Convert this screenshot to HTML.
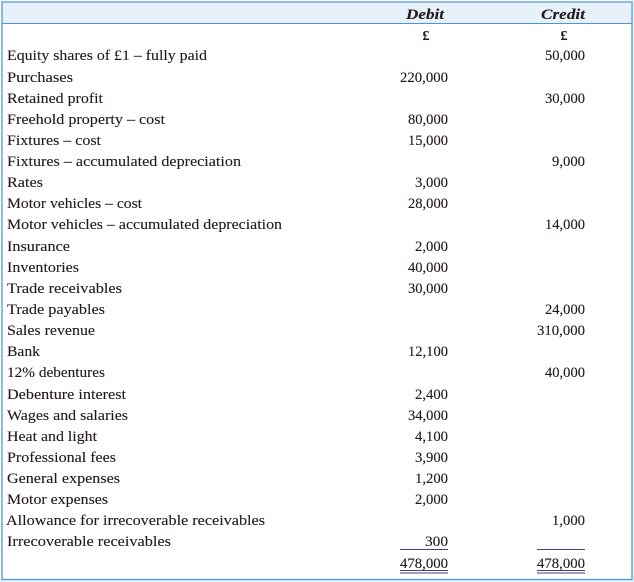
<!DOCTYPE html>
<html>
<head>
<meta charset="utf-8">
<style>
html,body{margin:0;padding:0;width:634px;height:582px;overflow:hidden;background:#fff}
svg{display:block}
text{font-family:"Liberation Serif",serif;font-size:14.5px;fill:#231a1a;stroke:#231a1a;stroke-width:.12px}
.n{text-anchor:end}
.h{font-weight:bold;font-style:italic;font-size:14.5px;text-anchor:middle}
.p{font-weight:bold;font-size:14px;text-anchor:middle}
</style>
</head>
<body>
<svg width="634" height="582" viewBox="0 0 634 582" xmlns="http://www.w3.org/2000/svg">
<rect x="0" y="0" width="634" height="582" fill="#fff"/>
<rect x="632" y="0" width="2" height="582" fill="#e4f3fb"/>
<rect x="0" y="580" width="634" height="2" fill="#e4f3fb"/>
<rect x="2" y="3" width="629" height="20" fill="#e8f0fa"/>
<rect x="2" y="2" width="630" height="577.5" fill="none" stroke="#4a97d8" stroke-width="1.3"/>
<rect x="2" y="23" width="630" height="1" fill="#4a97d8"/>

<text class="h" x="425" y="19" textLength="38" lengthAdjust="spacingAndGlyphs">Debit</text>
<text class="h" x="563" y="19" textLength="44" lengthAdjust="spacingAndGlyphs">Credit</text>
<text class="p" x="426" y="40">£</text>
<text class="p" x="564" y="40">£</text>

<text x="7" y="60" textLength="200" lengthAdjust="spacingAndGlyphs">Equity shares of £1 – fully paid</text>
<text x="7" y="82" textLength="66" lengthAdjust="spacingAndGlyphs">Purchases</text>
<text x="7" y="103" textLength="96" lengthAdjust="spacingAndGlyphs">Retained profit</text>
<text x="7" y="124" textLength="158" lengthAdjust="spacingAndGlyphs">Freehold property – cost</text>
<text x="7" y="145" textLength="94" lengthAdjust="spacingAndGlyphs">Fixtures – cost</text>
<text x="7" y="166" textLength="234" lengthAdjust="spacingAndGlyphs">Fixtures – accumulated depreciation</text>
<text x="7" y="187" textLength="36" lengthAdjust="spacingAndGlyphs">Rates</text>
<text x="7" y="208" textLength="135" lengthAdjust="spacingAndGlyphs">Motor vehicles – cost</text>
<text x="7" y="229" textLength="275" lengthAdjust="spacingAndGlyphs">Motor vehicles – accumulated depreciation</text>
<text x="7" y="251" textLength="63" lengthAdjust="spacingAndGlyphs">Insurance</text>
<text x="7" y="272" textLength="72" lengthAdjust="spacingAndGlyphs">Inventories</text>
<text x="7" y="293" textLength="115" lengthAdjust="spacingAndGlyphs">Trade receivables</text>
<text x="7" y="314" textLength="98" lengthAdjust="spacingAndGlyphs">Trade payables</text>
<text x="7" y="335" textLength="88" lengthAdjust="spacingAndGlyphs">Sales revenue</text>
<text x="7" y="356" textLength="33" lengthAdjust="spacingAndGlyphs">Bank</text>
<text x="7" y="377" textLength="98" lengthAdjust="spacingAndGlyphs">12% debentures</text>
<text x="7" y="399" textLength="119" lengthAdjust="spacingAndGlyphs">Debenture interest</text>
<text x="7" y="420" textLength="121" lengthAdjust="spacingAndGlyphs">Wages and salaries</text>
<text x="7" y="441" textLength="90" lengthAdjust="spacingAndGlyphs">Heat and light</text>
<text x="7" y="462" textLength="109" lengthAdjust="spacingAndGlyphs">Professional fees</text>
<text x="7" y="483" textLength="113" lengthAdjust="spacingAndGlyphs">General expenses</text>
<text x="7" y="504" textLength="101" lengthAdjust="spacingAndGlyphs">Motor expenses</text>
<text x="6" y="525" textLength="259" lengthAdjust="spacingAndGlyphs">Allowance for irrecoverable receivables</text>
<text x="7" y="546" textLength="164" lengthAdjust="spacingAndGlyphs">Irrecoverable receivables</text>

<text x="545" y="60" textLength="40" lengthAdjust="spacingAndGlyphs">50,000</text>
<text x="400" y="82" textLength="48" lengthAdjust="spacingAndGlyphs">220,000</text>
<text x="545" y="103" textLength="40" lengthAdjust="spacingAndGlyphs">30,000</text>
<text x="408" y="124" textLength="40" lengthAdjust="spacingAndGlyphs">80,000</text>
<text x="408" y="145" textLength="40" lengthAdjust="spacingAndGlyphs">15,000</text>
<text x="552" y="166" textLength="33" lengthAdjust="spacingAndGlyphs">9,000</text>
<text x="415" y="187" textLength="33" lengthAdjust="spacingAndGlyphs">3,000</text>
<text x="408" y="208" textLength="40" lengthAdjust="spacingAndGlyphs">28,000</text>
<text x="545" y="229" textLength="40" lengthAdjust="spacingAndGlyphs">14,000</text>
<text x="415" y="251" textLength="33" lengthAdjust="spacingAndGlyphs">2,000</text>
<text x="408" y="272" textLength="40" lengthAdjust="spacingAndGlyphs">40,000</text>
<text x="408" y="293" textLength="40" lengthAdjust="spacingAndGlyphs">30,000</text>
<text x="545" y="314" textLength="40" lengthAdjust="spacingAndGlyphs">24,000</text>
<text x="537" y="335" textLength="48" lengthAdjust="spacingAndGlyphs">310,000</text>
<text x="408" y="356" textLength="40" lengthAdjust="spacingAndGlyphs">12,100</text>
<text x="545" y="377" textLength="40" lengthAdjust="spacingAndGlyphs">40,000</text>
<text x="415" y="399" textLength="33" lengthAdjust="spacingAndGlyphs">2,400</text>
<text x="408" y="420" textLength="40" lengthAdjust="spacingAndGlyphs">34,000</text>
<text x="415" y="441" textLength="33" lengthAdjust="spacingAndGlyphs">4,100</text>
<text x="415" y="462" textLength="33" lengthAdjust="spacingAndGlyphs">3,900</text>
<text x="415" y="483" textLength="33" lengthAdjust="spacingAndGlyphs">1,200</text>
<text x="415" y="504" textLength="33" lengthAdjust="spacingAndGlyphs">2,000</text>
<text x="552" y="525" textLength="33" lengthAdjust="spacingAndGlyphs">1,000</text>
<text x="425" y="546" textLength="23" lengthAdjust="spacingAndGlyphs">300</text>
<text x="400" y="568" textLength="48" lengthAdjust="spacingAndGlyphs">478,000</text>
<text x="537" y="568" textLength="48" lengthAdjust="spacingAndGlyphs">478,000</text>

<g fill="#4b3f8a">
<rect x="400" y="549" width="48" height="1"/>
<rect x="537" y="549" width="48" height="1"/>
<rect x="400" y="570" width="48" height="1"/>
<rect x="537" y="570" width="48" height="1"/>
<rect x="400" y="572.5" width="48" height="1"/>
<rect x="537" y="572.5" width="48" height="1"/>
</g>
</svg>
</body>
</html>
